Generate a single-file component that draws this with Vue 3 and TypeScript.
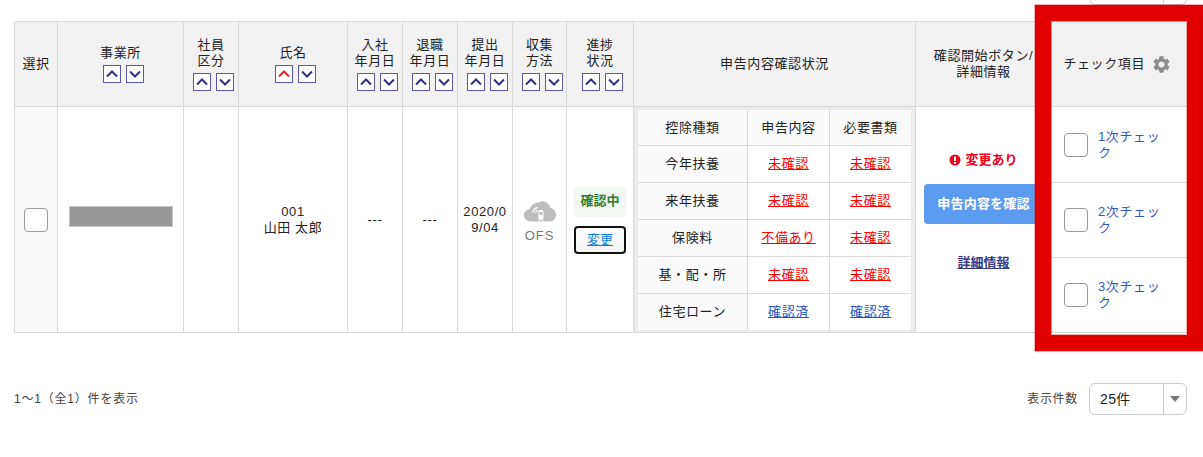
<script setup lang="ts">
interface Col { lines: string[]; active?: boolean }
const sortCols: Col[] = [
  { lines: ['事業所'] },
  { lines: ['社員', '区分'] },
  { lines: ['氏名'], active: true },
  { lines: ['入社', '年月日'] },
  { lines: ['退職', '年月日'] },
  { lines: ['提出', '年月日'] },
  { lines: ['収集', '方法'] },
  { lines: ['進捗', '状況'] }
]
const widths = [43, 126, 55, 109, 55, 55, 55, 54, 67, 282, 136, 136]
const rows = [
  { name: '今年扶養', a: '未確認', b: '未確認', ok: false },
  { name: '来年扶養', a: '未確認', b: '未確認', ok: false },
  { name: '保険料', a: '不備あり', b: '未確認', ok: false },
  { name: '基・配・所', a: '未確認', b: '未確認', ok: false },
  { name: '住宅ローン', a: '確認済', b: '確認済', ok: true }
]
const checks = ['1次チェック', '2次チェック', '3次チェック']
</script>

<template>
  <div class="page">
    <div class="pager top">
      <div class="select"><span class="val"></span><span class="arrow"></span></div>
    </div>

    <table class="grid">
      <colgroup><col v-for="(w, i) in widths" :key="i" :style="{ width: w + 'px' }" /></colgroup>
      <thead>
        <tr>
          <th>選択</th>
          <th v-for="c in sortCols" :key="c.lines.join()" class="sortable">
            <div v-for="l in c.lines" :key="l">{{ l }}</div>
            <div class="sort">
              <span class="sbtn" :class="{ on: c.active }">
                <svg viewBox="0 0 16 16" width="16" height="16"><path d="M3 10.5 8 5.5l5 5" /></svg>
              </span>
              <span class="sbtn">
                <svg viewBox="0 0 16 16" width="16" height="16"><path d="M3 5.5l5 5 5-5" /></svg>
              </span>
            </div>
          </th>
          <th>申告内容確認状況</th>
          <th class="clip"><div>確認開始ボタン/</div><div>詳細情報</div></th>
          <th>
            <div class="chkhead">
              <span>チェック項目</span>
              <svg class="gear" viewBox="2 2 20 20" width="17" height="17"><path d="M19.14 12.94c.04-.3.06-.61.06-.94 0-.32-.02-.64-.07-.94l2.03-1.58c.18-.14.23-.41.12-.61l-1.92-3.32c-.12-.22-.37-.29-.59-.22l-2.39.96c-.5-.38-1.03-.7-1.62-.94l-.36-2.54c-.04-.24-.24-.41-.48-.41h-3.84c-.24 0-.43.17-.47.41l-.36 2.54c-.59.24-1.13.57-1.62.94l-2.39-.96c-.22-.08-.47 0-.59.22L2.74 8.87c-.12.21-.08.47.12.61l2.03 1.58c-.05.3-.09.63-.09.94s.02.64.07.94l-2.03 1.58c-.18.14-.23.41-.12.61l1.92 3.32c.12.22.37.29.59.22l2.39-.96c.5.38 1.03.7 1.62.94l.36 2.54c.05.24.24.41.48.41h3.84c.24 0 .44-.17.47-.41l.36-2.54c.59-.24 1.13-.56 1.62-.94l2.39.96c.22.08.47 0 .59-.22l1.92-3.32c.12-.22.07-.47-.12-.61l-2.01-1.58zM12 15.6c-1.98 0-3.6-1.62-3.6-3.6s1.62-3.6 3.6-3.6 3.6 1.62 3.6 3.6-1.62 3.6-3.6 3.6z" /></svg>
            </div>
          </th>
        </tr>
      </thead>
      <tbody>
        <tr class="body">
          <td class="sel"><span class="box"></span></td>
          <td><div class="mask"></div></td>
          <td></td>
          <td><div>001</div><div>山田 太郎</div></td>
          <td>---</td>
          <td>---</td>
          <td class="date">2020/09/04</td>
          <td class="method">
            <svg class="cloud" viewBox="0 0 32 21" width="32" height="21">
              <path fill="#bdbdbd" d="M7 20.5C3 20.5 0 17.8 0 14.3c0-3.2 2.4-5.7 5.6-6C6.8 3.9 10.700 1.500 15 1.500c1.500-1 3-1.500 4.500-1 3.500.5 6 3 6.800 6.300C29.500 7.500 32 10.400 32 14c0 3.700-2.800 6.500-6.500 6.500z" />
              <path fill="none" stroke="#fff" stroke-width="1.300" d="M9 11.500c.4-2.600 2.300-4.500 4.800-5M11.500 12c.3-1.400 1.200-2.400 2.600-2.800" />
              <path fill="#fff" d="M14.500 10.500c0-1 1-1.600 2.500-1.600s2.500.6 2.500 1.600v6.500c0 .7-.5 1.200-1 1.300l1.300 2.200h-1.300l-1-1.800h-1.100l-1 1.800h-1.300l1.300-2.200c-.5-.1-1-.6-1-1.300z" />
              <path fill="#bdbdbd" d="M15.500 11h3v3h-3z" />
            </svg>
            <div class="ofs">OFS</div>
          </td>
          <td>
            <div class="status">
              <span class="badge">確認中</span>
              <a class="change">変更</a>
            </div>
          </td>
          <td class="nest">
            <table class="inner">
              <tbody>
                <tr class="ihead"><td class="kind">控除種類</td><td>申告内容</td><td>必要書類</td></tr>
                <tr v-for="r in rows" :key="r.name">
                  <td class="kind">{{ r.name }}</td>
                  <td><a :class="r.ok ? 'ok' : 'ng'">{{ r.a }}</a></td>
                  <td><a :class="r.ok ? 'ok' : 'ng'">{{ r.b }}</a></td>
                </tr>
              </tbody>
            </table>
          </td>
          <td>
            <div class="confirm">
              <div class="changed">
                <svg viewBox="0 0 12 12" width="12" height="12"><circle cx="6" cy="6" r="5.500" fill="#e8001c" /><rect x="5" y="2.500" width="2" height="4.500" fill="#fff" /><rect x="5" y="8" width="2" height="1.800" fill="#fff" /></svg>
                <span>変更あり</span>
              </div>
              <button class="primary" type="button">申告内容を確認</button>
              <a class="detail">詳細情報</a>
            </div>
          </td>
          <td>
            <div class="checks">
              <div v-for="c in checks" :key="c" class="check">
                <span class="box"></span>
                <span class="ctext">{{ c }}</span>
              </div>
            </div>
          </td>
        </tr>
      </tbody>
    </table>

    <div class="pager foot">
      <span class="count">1〜1（全1）件を表示</span>
      <span class="size">表示件数</span>
      <div class="select"><span class="val">25件</span><span class="arrow"><i></i></span></div>
    </div>

    <div class="mark"></div>
  </div>
</template>

<style>
html, body { margin: 0; background: #fff; overflow: hidden; }
</style>

<style scoped>
.page {
  position: relative;
  width: 1203px;
  height: 457px;
  overflow: hidden;
  padding: 0 16px 0 14px;
  box-sizing: border-box;
  font-family: "Liberation Sans", "Noto Sans CJK JP", sans-serif;
  font-size: 13px;
  line-height: 16px;
  letter-spacing: .6px;
  color: #222;
}
.pager { display: flex; align-items: center; justify-content: flex-end; }
.pager.top { margin-top: -27px; }
.select {
  box-sizing: border-box;
  width: 98px;
  height: 32px;
  border: 1px solid #ccc;
  border-radius: 6px;
  display: flex;
  background: #fff;
}
.val { flex: 1; padding-left: 10px; line-height: 30px; font-size: 14px; letter-spacing: .4px; color: #222; }
.arrow { width: 22px; border-left: 1px solid #ccc; display: flex; align-items: center; justify-content: center; }
.arrow i { border: 5px solid transparent; border-top: 6px solid #777; border-bottom: 0; }

.grid {
  table-layout: fixed;
  border-collapse: collapse;
  width: 1173px;
  margin-top: 16px;
}
.grid > thead > tr > th, .grid > tbody > tr > td {
  border: 1px solid #d9d9d9;
  padding: 0;
  text-align: center;
  vertical-align: middle;
}
.grid > thead > tr { height: 85px; }
.grid > thead > tr > th { background: #f2f2f2; font-weight: 400; }
.grid > thead > tr > th.sortable { padding-bottom: 1px; }
.grid > tbody > tr.body { height: 225px; }
.clip { white-space: nowrap; overflow: hidden; }
.sort { display: flex; justify-content: center; gap: 5px; margin-top: 4px; padding-left: 5px; }
.sbtn {
  box-sizing: border-box;
  width: 18px;
  height: 18px;
  border: 1px solid #5b55ad;
  background: #fff;
  display: block;
}
.sbtn svg { display: block; fill: none; stroke: #2f2f85; stroke-width: 2; }
.sbtn.on svg { stroke: #e8202a; }
.chkhead { display: flex; align-items: center; justify-content: flex-end; gap: 8px; padding-right: 17px; }
.gear { fill: #8c8c8c; }

.sel { background: #fafafa; }
.box {
  box-sizing: border-box;
  display: block;
  flex: none;
  width: 24px;
  height: 24px;
  border: 1px solid #999;
  border-radius: 4px;
  background: #fff;
}
.sel .box { margin: 0 auto; }
.mask { width: 104px; height: 21px; background: #999; border: 1px solid #c4c4c4; box-sizing: border-box; margin: -7px auto 0; }
.date { word-break: break-all; padding: 0 4px !important; }
.cloud { display: block; margin: 0 auto; }
.method { padding-top: 6px !important; }
.ofs { color: #777; margin-top: 6px; letter-spacing: 1px; }
.status { display: flex; flex-direction: column; align-items: center; gap: 9px; margin-top: 1px; }
.badge {
  box-sizing: border-box;
  width: 52px;
  height: 30px;
  line-height: 28px;
  border-radius: 4px;
  background: #f2f9f2;
  color: #2e7d32;
  font-weight: 700;
  letter-spacing: 0;
}
.change {
  box-sizing: border-box;
  width: 52px;
  height: 28px;
  line-height: 24px;
  border: 2px solid #111;
  border-radius: 4px;
  background: linear-gradient(#fff, #f4f4f4);
  color: #0a7fe0;
  text-decoration: underline;
  letter-spacing: 0;
}
.grid > tbody > tr > td.nest { background: #ebebeb; padding: 2px 4px 1px 4px; }
.inner { table-layout: fixed; border-collapse: collapse; width: 100%; background: #fff; }
.inner td { height: 36px; padding: 0; text-align: center; border-top: 1px solid #d9d9d9; border-left: 1px solid #d9d9d9; }
.inner tr:first-child td { border-top: 0; height: 35px; }
.inner td:first-child { border-left: 0; width: 109px; }
.inner td:nth-child(2) { width: 81px; }
.inner .kind, .ihead td { background: #fafafa; }
.ng { color: #f00; text-decoration: underline; }
.ok { color: #2b50c0; text-decoration: underline; }
.confirm { display: flex; flex-direction: column; align-items: center; margin-top: -17px; letter-spacing: 0; }
.changed { display: flex; align-items: center; gap: 4px; color: #e8001c; font-weight: 700; }
.primary {
  width: 120px;
  height: 40px;
  margin-top: 16px;
  border: 0;
  padding: 0;
  border-radius: 4px;
  background: #5b9bf0;
  color: #fff;
  font: inherit;
  font-weight: 700;
  letter-spacing: .2px;
}
.detail { margin-top: 31px; color: #3a3a85; font-weight: 700; text-decoration: underline; }
.checks { display: flex; flex-direction: column; }
.check {
  height: 75px;
  box-sizing: border-box;
  display: flex;
  align-items: center;
  gap: 10px;
  padding-left: 12px;
  border-bottom: 1px solid #d9d9d9;
  text-align: left;
}
.check:first-child { height: 76px; }
.check:last-child { height: 74px; border-bottom: 0; }
.ctext { width: 68px; color: #3355bb; }

.foot { margin-top: 50px; }
.count { margin-right: auto; color: #444; font-size: 12px; letter-spacing: .8px; }
.size { margin-right: 11px; color: #444; font-size: 12px; letter-spacing: .7px; }

.mark {
  position: absolute;
  left: 1035px;
  top: 5px;
  width: 168px;
  height: 346px;
  box-sizing: border-box;
  border: 16px solid #e00000;
  box-shadow: inset 0 0 0 1px rgba(224, 0, 0, .3), 0 0 0 1px rgba(224, 0, 0, .3);
}
</style>
